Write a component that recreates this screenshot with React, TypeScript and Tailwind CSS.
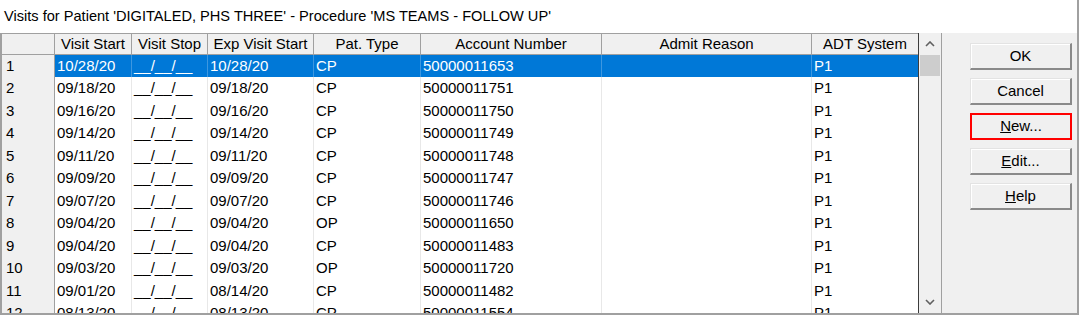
import React from 'react'

type Visit = {
  start: string
  stop: string
  exp: string
  type: string
  account: string
  reason: string
  adt: string
}

const visits: Visit[] = [
  { start: '10/28/20', stop: '__/__/__', exp: '10/28/20', type: 'CP', account: '50000011653', reason: '', adt: 'P1' },
  { start: '09/18/20', stop: '__/__/__', exp: '09/18/20', type: 'CP', account: '50000011751', reason: '', adt: 'P1' },
  { start: '09/16/20', stop: '__/__/__', exp: '09/16/20', type: 'CP', account: '50000011750', reason: '', adt: 'P1' },
  { start: '09/14/20', stop: '__/__/__', exp: '09/14/20', type: 'CP', account: '50000011749', reason: '', adt: 'P1' },
  { start: '09/11/20', stop: '__/__/__', exp: '09/11/20', type: 'CP', account: '50000011748', reason: '', adt: 'P1' },
  { start: '09/09/20', stop: '__/__/__', exp: '09/09/20', type: 'CP', account: '50000011747', reason: '', adt: 'P1' },
  { start: '09/07/20', stop: '__/__/__', exp: '09/07/20', type: 'CP', account: '50000011746', reason: '', adt: 'P1' },
  { start: '09/04/20', stop: '__/__/__', exp: '09/04/20', type: 'OP', account: '50000011650', reason: '', adt: 'P1' },
  { start: '09/04/20', stop: '__/__/__', exp: '09/04/20', type: 'CP', account: '50000011483', reason: '', adt: 'P1' },
  { start: '09/03/20', stop: '__/__/__', exp: '09/03/20', type: 'OP', account: '50000011720', reason: '', adt: 'P1' },
  { start: '09/01/20', stop: '__/__/__', exp: '08/14/20', type: 'CP', account: '50000011482', reason: '', adt: 'P1' },
  { start: '08/13/20', stop: '__/__/__', exp: '08/13/20', type: 'CP', account: '50000011554', reason: '', adt: 'P1' },
]

const headers = ['Visit Start', 'Visit Stop', 'Exp Visit Start', 'Pat. Type', 'Account Number', 'Admit Reason', 'ADT System']

const gridCols = 'grid grid-cols-[53px_77px_76px_106px_107px_181px_210px_107px]'

function WinButton({ children, highlight }: { children: React.ReactNode; highlight?: boolean }) {
  return (
    <div
      className={`h-[27px] w-[102px] flex items-center justify-center bg-[#f0f0f0] text-[15px] text-black ${
        highlight
          ? 'border-2 border-[#ff0000]'
          : 'border-t border-l border-[#e3e3e3] border-r-2 border-b-2 border-r-[#8a8a8a] border-b-[#8a8a8a] shadow-[inset_1px_1px_0_#ffffff]'
      }`}
    >
      {children}
    </div>
  )
}

export default function App() {
  return (
    <div
      className="w-[1079px] h-[315px] bg-[#f0f0f0] border-r-2 border-b-2 border-[#a0a0a0] flex flex-col overflow-hidden"
      style={{ fontFamily: '"Liberation Sans", Arial, sans-serif' }}
    >
      {/* title */}
      <div className="h-[33px] shrink-0 bg-white flex items-center pl-[4px] text-[14.6px] text-black">
        Visits for Patient 'DIGITALED, PHS THREE' - Procedure 'MS TEAMS - FOLLOW UP'
      </div>

      <div className="flex flex-1 min-h-0">
        {/* grid */}
        <div className="w-[919px] border-l-2 border-[#a0a0a0] border-r border-r-[#3c3c3c] bg-white overflow-hidden">
          <div className={`${gridCols} h-[22px] border-t border-[#a0a0a0]`}>
            <div className="bg-[#f0f0f0] border-r border-b border-[#a0a0a0]" />
            {headers.map(h => (
              <div
                key={h}
                className="bg-[#f0f0f0] border-r border-b border-[#a0a0a0] flex items-center justify-center text-[15px] text-black whitespace-nowrap overflow-hidden"
              >
                {h}
              </div>
            ))}
          </div>
          {visits.map((v, i) => {
            const sel = i === 0
            const cell = sel
              ? 'bg-[#0078d7] text-white border-r border-b border-[#3d97e0]'
              : 'bg-white text-black border-r border-b border-[#e8e8e8]'
            return (
              <div key={i} className={`${gridCols} ${i % 2 === 0 ? 'h-[22px]' : 'h-[23px]'} text-[15px]`}>
                <div className="bg-[#f0f0f0] border-r border-b border-[#a0a0a0] flex items-center pl-[4px] text-black">
                  {i + 1}
                </div>
                {[v.start, v.stop, v.exp, v.type, v.account, v.reason, v.adt].map((c, j) => (
                  <div key={j} className={`${cell} flex items-center pl-[2px] whitespace-nowrap overflow-hidden`}>
                    {c}
                  </div>
                ))}
              </div>
            )
          })}
        </div>

        {/* scrollbar */}
        <div className="w-[23px] border-r border-[#a0a0a0] bg-[#f0f0f0] flex flex-col items-center">
          <div className="h-[22px] w-full flex items-center justify-center">
            <svg width="10" height="6" viewBox="0 0 10 6">
              <path d="M1 5 L5 1 L9 5" fill="none" stroke="#606060" strokeWidth="1.6" />
            </svg>
          </div>
          <div className="h-[21px] w-[20px] bg-[#cdcdcd]" />
          <div className="flex-1" />
          <div className="h-[22px] w-full flex items-center justify-center">
            <svg width="10" height="6" viewBox="0 0 10 6">
              <path d="M1 1 L5 5 L9 1" fill="none" stroke="#606060" strokeWidth="1.6" />
            </svg>
          </div>
        </div>

        {/* buttons */}
        <div className="flex-1 flex flex-col items-start pl-[28px] pt-[10px] gap-[8px]">
          <WinButton>OK</WinButton>
          <WinButton>Cancel</WinButton>
          <WinButton highlight>
            <span>
              <span className="underline">N</span>ew...
            </span>
          </WinButton>
          <WinButton>
            <span>
              <span className="underline">E</span>dit...
            </span>
          </WinButton>
          <WinButton>
            <span>
              <span className="underline">H</span>elp
            </span>
          </WinButton>
        </div>
      </div>
    </div>
  )
}
